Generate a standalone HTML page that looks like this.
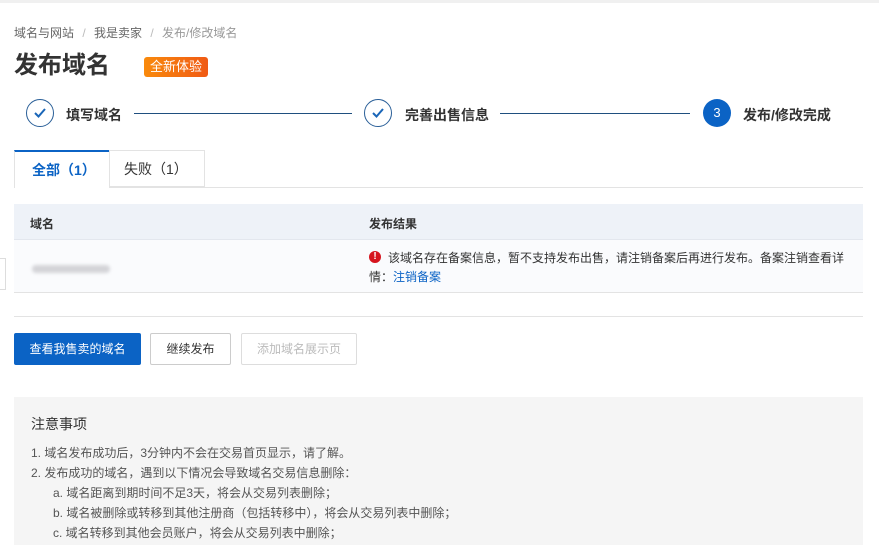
<!DOCTYPE html>
<html><head><meta charset="utf-8"><style>
*{margin:0;padding:0;box-sizing:border-box}
body{width:879px;height:545px;overflow:hidden;background:#fff;font-family:"Liberation Sans","Noto Sans CJK SC",sans-serif;color:#333;position:relative}
.a{position:absolute;white-space:nowrap}
.c{position:absolute;width:28px;height:28px;border-radius:50%;border:1.5px solid #2a5f98;}
.c svg{position:absolute;left:6px;top:7px}
.st{font-size:14px;font-weight:bold;color:#333}
.ln{position:absolute;height:1px;background:#1f4f7f}
.btn{position:absolute;top:333px;height:32px;font-size:12px;line-height:30px;text-align:center;border:1px solid #ccc;border-radius:2px}
.nt{font-size:12px;color:#555;position:absolute;white-space:nowrap}
</style></head><body>
<div class="a" style="left:0;top:0;width:879px;height:3px;background:#f0f0f0"></div>
<div class="a" style="left:14px;top:24px;font-size:12px;color:#666">域名与网站 <span style="color:#bbb;margin:0 5px">/</span> 我是卖家 <span style="color:#bbb;margin:0 5px">/</span> <span style="color:#999">发布/修改域名</span></div>
<div class="a" style="left:14px;top:50px;font-size:24px;font-weight:bold;color:#333;line-height:32px">发布域名</div>
<div class="a" style="left:144px;top:57px;width:64px;height:20px;border-radius:3px;background:linear-gradient(90deg,#f98a0c,#f05a14);color:#fff;font-size:13px;line-height:20px;text-align:center">全新体验</div>

<div class="c" style="left:26px;top:99px"><svg width="14" height="12" viewBox="0 0 14 12"><path d="M2 6l3.5 3.5L12 2" fill="none" stroke="#1a66b8" stroke-width="2"/></svg></div>
<div class="a st" style="left:66px;top:105px">填写域名</div>
<div class="ln" style="left:134px;top:113px;width:218px"></div>
<div class="c" style="left:364px;top:99px"><svg width="14" height="12" viewBox="0 0 14 12"><path d="M2 6l3.5 3.5L12 2" fill="none" stroke="#1a66b8" stroke-width="2"/></svg></div>
<div class="a st" style="left:405px;top:105px">完善出售信息</div>
<div class="ln" style="left:500px;top:113px;width:190px"></div>
<div class="a" style="left:703px;top:99px;width:28px;height:28px;border-radius:50%;background:#0b63c5;color:#fff;font-size:13px;line-height:28px;text-align:center">3</div>
<div class="a st" style="left:743px;top:105px">发布/修改完成</div>

<div class="a" style="left:14px;top:187px;width:849px;height:1px;background:#e3e3e3"></div>
<div class="a" style="left:14px;top:150px;width:95px;height:38px;border-top:2px solid #0b63c5;border-left:1px solid #e3e3e3;background:#fff;color:#0b63c5;font-size:14px;font-weight:bold;line-height:36px;padding-left:17px">全部（1）</div>
<div class="a" style="left:109px;top:150px;width:96px;height:37px;border:1px solid #e3e3e3;font-size:14px;line-height:36px;padding-left:14px;color:#333">失败（1）</div>

<div class="a" style="left:14px;top:204px;width:849px;height:36px;background:#eef2f8;border-bottom:1px solid #e3e7ee"></div>
<div class="a" style="left:30px;top:215px;font-size:12px;font-weight:bold">域名</div>
<div class="a" style="left:369px;top:215px;font-size:12px;font-weight:bold">发布结果</div>
<div class="a" style="left:14px;top:240px;width:849px;height:53px;background:#fafbfd;border-bottom:1px solid #e3e3e3"></div>
<div class="a" style="left:32px;top:265px;width:78px;height:8px;background:#d4d4d8;border-radius:4px;filter:blur(1.5px)"></div>
<div class="a" style="left:369px;top:251px;width:12px;height:12px;border-radius:50%;background:#d6141e;color:#fff;font-size:10px;font-weight:bold;line-height:12px;text-align:center">!</div>
<div class="a" style="left:388px;top:249px;font-size:12px;color:#333">该域名存在备案信息，暂不支持发布出售，请注销备案后再进行发布。备案注销查看详</div>
<div class="a" style="left:369px;top:268px;font-size:12px;color:#333">情：<span style="color:#0b63c5">注销备案</span></div>
<div class="a" style="left:0;top:258px;width:6px;height:32px;border:1px solid #ddd;border-left:none;background:#fff"></div>
<div class="a" style="left:14px;top:316px;width:849px;height:1px;background:#e3e3e3"></div>

<div class="btn" style="left:14px;width:127px;background:#0b63c5;border-color:#0b63c5;color:#fff">查看我售卖的域名</div>
<div class="btn" style="left:150px;width:81px;color:#333;background:#fff">继续发布</div>
<div class="btn" style="left:241px;width:116px;color:#bbb;border-color:#ddd;background:#fff">添加域名展示页</div>

<div class="a" style="left:14px;top:397px;width:849px;height:148px;background:#f5f5f5"></div>
<div class="a" style="left:31px;top:414px;font-size:14px;color:#333">注意事项</div>
<div class="nt" style="left:31px;top:444px">1. 域名发布成功后，3分钟内不会在交易首页显示，请了解。</div>
<div class="nt" style="left:31px;top:464px">2. 发布成功的域名，遇到以下情况会导致域名交易信息删除：</div>
<div class="nt" style="left:53px;top:484px">a. 域名距离到期时间不足3天，将会从交易列表删除；</div>
<div class="nt" style="left:53px;top:504px">b. 域名被删除或转移到其他注册商（包括转移中），将会从交易列表中删除；</div>
<div class="nt" style="left:53px;top:524px">c. 域名转移到其他会员账户，将会从交易列表中删除；</div>
</body></html>
